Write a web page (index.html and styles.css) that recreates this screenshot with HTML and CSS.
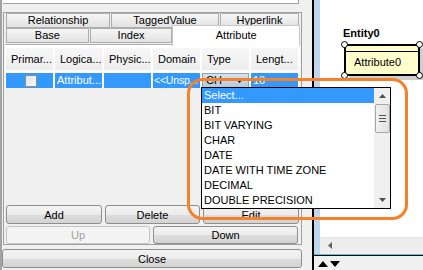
FILE: index.html
```html
<!DOCTYPE html>
<html>
<head>
  <title>Entity - Attribute</title>
  <link rel="stylesheet" href="styles.css">
</head>
<body>
  <div class="dialog">
    <div class="topfield"></div>
    <div class="group">
      <div class="tab-row">
        <div class="tab w-rel">Relationship</div>
        <div class="tab w-tag">TaggedValue</div>
        <div class="tab w-hyp">Hyperlink</div>
      </div>
      <div class="tab-row row2">
        <div class="tab w-base">Base</div>
        <div class="tab w-index">Index</div>
        <div class="tab active">Attribute</div>
      </div>
      <div class="tabpage">
        <div class="grid">
          <div class="grid-row head">
            <div class="cell">Primar...</div>
            <div class="cell">Logica...</div>
            <div class="cell">Physic...</div>
            <div class="cell">Domain</div>
            <div class="cell">Type</div>
            <div class="cell">Lengt...</div>
          </div>
          <div class="grid-row selected">
            <div class="cell center"><span class="checkbox"></span></div>
            <div class="cell">Attribut...</div>
            <div class="cell"></div>
            <div class="cell tight">&lt;&lt;Unsp...</div>
            <div class="cell combo">
              <span>CH</span>
              <svg width="7" height="4" viewBox="0 0 7 4"><path d="M0 0h7L3.5 4z" fill="#000"/></svg>
            </div>
            <div class="cell">10</div>
          </div>
        </div>
      </div>
      <div class="btn-row three">
        <button class="btn">Add</button>
        <button class="btn">Delete</button>
        <button class="btn">Edit</button>
      </div>
      <div class="btn-row two">
        <button class="btn" disabled>Up</button>
        <button class="btn">Down</button>
      </div>
    </div>
    <button class="btn close">Close</button>
  </div>

  <div class="spacer"></div>

  <div class="canvas">
    <div class="canvas-main">
      <div class="strip"></div>
      <div class="area">
        <div class="entity">
          <div class="entity-name">Entity0</div>
          <div class="entity-box">
            <div class="entity-head"></div>
            <div class="entity-attr">Attribute0</div>
          </div>
          <span class="handle tl"></span>
          <span class="handle tr"></span>
          <span class="handle bl"></span>
          <span class="handle br"></span>
        </div>
      </div>
    </div>
    <div class="canvas-scroll">
      <div class="strip"></div>
      <div class="hscroll">
        <svg width="4" height="7" viewBox="0 0 4 7"><path d="M4 0v7L0 3.5z" fill="#606060"/></svg>
      </div>
    </div>
    <div class="canvas-foot">
      <svg width="24" height="8" viewBox="0 0 24 8"><path d="M1 7L6 1l5 6z M13 1h10l-5 6z" fill="#000"/></svg>
    </div>
  </div>

  <div class="droplist">
    <div class="items">
      <div class="item on">Select...</div>
      <div class="item">BIT</div>
      <div class="item">BIT VARYING</div>
      <div class="item">CHAR</div>
      <div class="item">DATE</div>
      <div class="item">DATE WITH TIME ZONE</div>
      <div class="item">DECIMAL</div>
      <div class="item">DOUBLE PRECISION</div>
    </div>
    <div class="vscroll">
      <svg class="arr" width="7" height="4" viewBox="0 0 7 4"><path d="M0 4h7L3.5 0z" fill="#505050"/></svg>
      <div class="thumb"><i></i><i></i><i></i></div>
      <svg class="arr down" width="7" height="4" viewBox="0 0 7 4"><path d="M0 0h7L3.5 4z" fill="#505050"/></svg>
    </div>
  </div>

  <svg class="callout" width="423" height="270" viewBox="0 0 423 270">
    <rect x="188.5" y="79.5" width="218" height="139" rx="14" ry="14" fill="none" stroke="#f5822a" stroke-width="3"/>
  </svg>
</body>
</html>
```

FILE: styles.css
```css
:root {
  --face: #f0f0f0;
  --edge: #acacac;
  --select: #3399ff;
}

* {
  margin: 0;
  padding: 0;
  box-sizing: border-box;
}

body {
  width: 423px;
  height: 270px;
  overflow: hidden;
  display: flex;
  background: var(--face);
  font-family: 'Liberation Sans', Arial, sans-serif;
  font-size: 11px;
  color: #000;
  position: relative;
}

/* left dialog */
.dialog {
  width: 305px;
  height: 270px;
  border-left: 2px solid #a3a3a3;
  display: flex;
  flex-direction: column;
}

.topfield {
  height: 4px;
  width: 296px;
  margin-left: 1px;
  background: #fff;
  border-bottom: 1px solid #a0a0a0;
  border-right: 1px solid #a0a0a0;
}

.group {
  margin-top: 8px;
  margin-left: 1px;
  width: 299px;
  height: 233px;
  border: 1px solid #a0a0a0;
  padding: 0 1px;
  display: flex;
  flex-direction: column;
}

.tab-row {
  display: flex;
  gap: 1px;
  padding-left: 1px;
  height: 15px;
}

.tab-row.row2 {
  height: 16px;
}

.tab {
  height: 15px;
  line-height: 13px;
  text-align: center;
  border: 1px solid var(--edge);
  background: linear-gradient(#f6f6f6, #e2e2e2);
}

.w-rel { width: 104px; }
.w-tag { width: 108px; }
.w-hyp { width: 79px; }
.w-base { width: 83px; }
.w-index { width: 83px; }

.tab.active {
  position: relative;
  z-index: 1;
  margin-top: -3px;
  margin-left: -1px;
  width: 128px;
  height: 21px;
  line-height: 19px;
  background: #fff;
  border-bottom: none;
  border-color: #c8c8c8;
}

.tabpage {
  height: 158px;
  border-top: 1px solid var(--edge);
}

.grid {
  background: #fff;
  padding: 3px 0 0 1px;
}

.grid-row {
  display: grid;
  grid-template-columns: repeat(6, 47px);
  column-gap: 2px;
}

.grid-row.head {
  height: 22px;
}

.grid-row.head .cell {
  background: linear-gradient(#f7f7f7, #ededed);
  line-height: 22px;
  padding-left: 5px;
}

.grid-row.selected {
  margin-top: 3px;
  height: 15px;
}

.grid-row.selected .cell {
  background: var(--select);
  color: #fff;
  line-height: 15px;
  padding-left: 2px;
}

.cell {
  white-space: nowrap;
  overflow: hidden;
}

.grid-row.selected .cell.tight {
  padding-left: 1px;
  font-size: 10.5px;
  letter-spacing: -0.2px;
}

.grid-row.selected .cell.center {
  display: flex;
  justify-content: center;
  align-items: center;
}

.checkbox {
  width: 12px;
  height: 12px;
  border: 1px solid #8f8f8f;
  background: linear-gradient(135deg, #e0e0e0, #fcfcfc);
}

.grid-row.selected .cell.combo {
  background: linear-gradient(#d5e2ef, #b4c9de);
  color: #000;
  display: flex;
  align-items: center;
  justify-content: space-between;
  padding: 0 5px 0 3px;
  border: 1px solid #8aa4c0;
}

.btn-row {
  display: grid;
  padding-left: 1px;
  width: 293px;
}

.btn-row.three {
  margin-top: 3px;
  grid-template-columns: 96px 95px 96px;
  column-gap: 3px;
  height: 19px;
}

.btn-row.two {
  margin-top: 2px;
  grid-template-columns: 144px 145px;
  column-gap: 3px;
  height: 18px;
}

.btn {
  font-family: inherit;
  font-size: 11px;
  color: #000;
  border: 1px solid #8e8e8e;
  border-radius: 3px;
  background: linear-gradient(#f3f3f3 0%, #ececec 50%, #dddddd 51%, #d3d3d3 100%);
  padding: 0;
}

.btn:disabled {
  color: #a0a0a0;
  border-color: #c4c4c4;
  background: #f4f4f4;
}

.btn.close {
  margin-top: 4px;
  width: 300px;
  height: 19px;
}

.spacer {
  width: 7px;
}

/* diagram canvas */
.canvas {
  flex: 1;
  border-left: 2px solid #000;
  display: flex;
  flex-direction: column;
}

.canvas-main {
  height: 238px;
  display: flex;
}

.strip {
  width: 6px;
  background: #bfd6ee;
}

.area {
  flex: 1;
  background: #fff;
  position: relative;
}

.entity {
  position: absolute;
  left: 23px;
  top: 27px;
}

.entity-name {
  font-weight: bold;
  font-size: 11px;
  height: 17px;
}

.entity-box {
  margin-left: 1px;
  width: 76px;
  height: 32px;
  border: 2px solid #000;
  background: #ffffcc;
  box-shadow: 5px 4px 0 #cfcfcf;
}

.entity-head {
  height: 6px;
  border-bottom: 1px solid #000;
}

.entity-attr {
  padding-left: 8px;
  line-height: 20px;
  font-size: 11px;
}

.handle {
  position: absolute;
  width: 7px;
  height: 7px;
  border: 1px solid #000;
  border-radius: 50%;
  background: #fff;
}

.handle.tl { left: -2px; top: 14px; }
.handle.tr { left: 73px; top: 14px; }
.handle.bl { left: -2px; top: 45px; }
.handle.br { left: 73px; top: 45px; }

.canvas-scroll {
  height: 17px;
  display: flex;
}

.hscroll {
  flex: 1;
  height: 15px;
  background: #ededed;
  border-top: 1px solid #e2e2e2;
  display: flex;
  align-items: center;
  padding-left: 8px;
}

.canvas-foot {
  flex: 1;
  border-top: 1px solid #45c8e8;
  box-shadow: inset 0 1px 0 #000;
  padding: 3px 0 0 3px;
}

/* drop-down list of the Type combo */
.droplist {
  position: absolute;
  left: 201px;
  top: 87px;
  width: 190px;
  height: 122px;
  border: 1px solid #000;
  background: #fff;
  display: flex;
  z-index: 2;
}

.items {
  flex: 1;
}

.item {
  height: 15px;
  line-height: 15px;
  padding-left: 2px;
  white-space: nowrap;
  overflow: hidden;
}

.item.on {
  background: var(--select);
  color: #fff;
}

.vscroll {
  width: 16px;
  background: #f0f0f0;
  display: flex;
  flex-direction: column;
  align-items: center;
  padding-top: 6px;
}

.thumb {
  margin-top: 6px;
  width: 15px;
  height: 29px;
  border: 1px solid #a8a8a8;
  border-radius: 2px;
  background: linear-gradient(90deg, #f2f2f2, #e0e0e0);
  display: flex;
  flex-direction: column;
  align-items: center;
  justify-content: center;
  gap: 2px;
}

.thumb i {
  width: 7px;
  height: 1px;
  background: #555;
}

.arr.down {
  margin-top: auto;
  margin-bottom: 6px;
}

.callout {
  position: absolute;
  left: 0;
  top: 0;
  z-index: 3;
  pointer-events: none;
}
```
